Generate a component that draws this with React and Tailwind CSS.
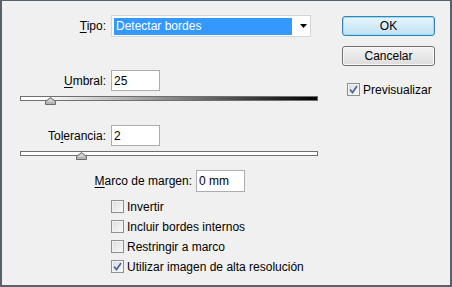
import React from "react";

const FONT = { fontFamily: '"Liberation Sans", Arial, sans-serif' };

const Check = ({ checked }) => (
  <span className="relative flex h-[13px] w-[13px] shrink-0 items-center justify-center border border-[#8e8f8f] bg-gradient-to-br from-[#dcdcdc] to-[#fbfbfb]">
    <span className="absolute inset-0 border border-[#f4f4f4]" />
    {checked && (
      <svg width="9" height="9" viewBox="0 0 9 9" className="relative">
        <path d="M1 4.5 L3.5 7.5 L8 1" fill="none" stroke="#4566a8" strokeWidth="1.7" />
      </svg>
    )}
  </span>
);

const Label = ({ width, pre, u, post }) => (
  <span className="shrink-0 text-right" style={{ width }}>
    {pre}
    <span className="underline underline-offset-[2px]">{u}</span>
    {post}
  </span>
);

const Field = ({ value, width = 49, height = 21 }) => (
  <div
    className="flex items-center border border-[#abadb3] bg-white pl-[2px] text-black"
    style={{ width, height }}
  >
    {value}
  </div>
);

const Slider = ({ gradient, pos }) => (
  <div
    className={`relative h-[5px] w-[298px] border border-[#6f6f6f] ${
      gradient
        ? "bg-[linear-gradient(to_right,#ffffff_0%,#ffffff_8%,#000000_100%)]"
        : "bg-white"
    }`}
  >
    <svg
      width="11"
      height="8"
      viewBox="0 0 11 8"
      className="absolute top-[0px]"
      style={{ left: pos - 5 }}
    >
      <path d="M5.5 0.5 L10.5 4.5 L10.5 7.5 L0.5 7.5 L0.5 4.5 Z" fill="#b4b4b4" stroke="#6b6b6b" />
      <path d="M5.5 1.8 L9.3 4.8 L1.7 4.8 Z" fill="#d6d6d6" />
    </svg>
  </div>
);

const CheckRow = ({ checked, text }) => (
  <div className="flex h-[13px] items-center gap-[3px]">
    <Check checked={checked} />
    <span className="leading-none">{text}</span>
  </div>
);

export default function App() {
  return (
    <div
      className="flex h-[287px] w-[452px] border-x-2 border-b-2 border-t border-[#59616d] bg-[#f0f0f0] text-[12px] text-black"
      style={FONT}
    >
      {/* left column */}
      <div className="flex w-[340px] flex-col pl-[18px] pt-[14px]">
        <div className="flex h-[22px] items-center gap-[5px]">
          <Label width={86} u="T" post="ipo:" />
          <div className="flex h-[22px] w-[200px] items-center border border-[#d5d5d5] bg-white px-[2px]">
            <div className="flex h-[17px] w-[178px] items-center bg-[#3399ff] pl-[2px] text-white">
              Detectar bordes
            </div>
            <svg width="7" height="4" viewBox="0 0 7 4" className="ml-[8px]">
              <path d="M0 0 H7 L3.5 4 Z" fill="#000" />
            </svg>
          </div>
        </div>

        <div className="mt-[33px] flex h-[21px] items-center gap-[5px]">
          <Label width={86} u="U" post="mbral:" />
          <Field value="25" />
        </div>
        <div className="mt-[5px]">
          <Slider gradient pos={29} />
        </div>

        <div className="mt-[24px] flex h-[21px] items-center gap-[5px]">
          <Label width={86} pre="To" u="l" post="erancia:" />
          <Field value="2" />
        </div>
        <div className="mt-[5px]">
          <Slider pos={60} />
        </div>

        <div className="mt-[14px] flex h-[22px] items-center gap-[4px]">
          <Label width={172} u="M" post="arco de margen:" />
          <Field value="0 mm" height={22} />
        </div>

        <div className="ml-[91px] mt-[8px] flex flex-col gap-[7px]">
          <CheckRow text="Invertir" />
          <CheckRow text="Incluir bordes internos" />
          <CheckRow text="Restringir a marco" />
          <CheckRow checked text="Utilizar imagen de alta resolución" />
        </div>
      </div>

      {/* right column */}
      <div className="flex flex-col pt-[15px]">
        <button className="flex h-[20px] w-[93px] items-center justify-center rounded-[3px] border border-[#3c7fb1] bg-gradient-to-b from-[#e8f5fc] to-[#bfe2f5] shadow-[inset_0_0_0_1px_#8fe2fb] text-black">
          OK
        </button>
        <button className="mt-[10px] flex h-[20px] w-[93px] items-center justify-center rounded-[3px] border border-[#707070] bg-gradient-to-b from-[#f4f4f4] to-[#dcdcdc] shadow-[inset_0_0_0_1px_#fbfbfb] text-black">
          Cancelar
        </button>
        <div className="ml-[5px] mt-[17px] flex h-[13px] items-center gap-[3px]">
          <Check checked />
          <span className="leading-none">Previsualizar</span>
        </div>
      </div>
    </div>
  );
}
